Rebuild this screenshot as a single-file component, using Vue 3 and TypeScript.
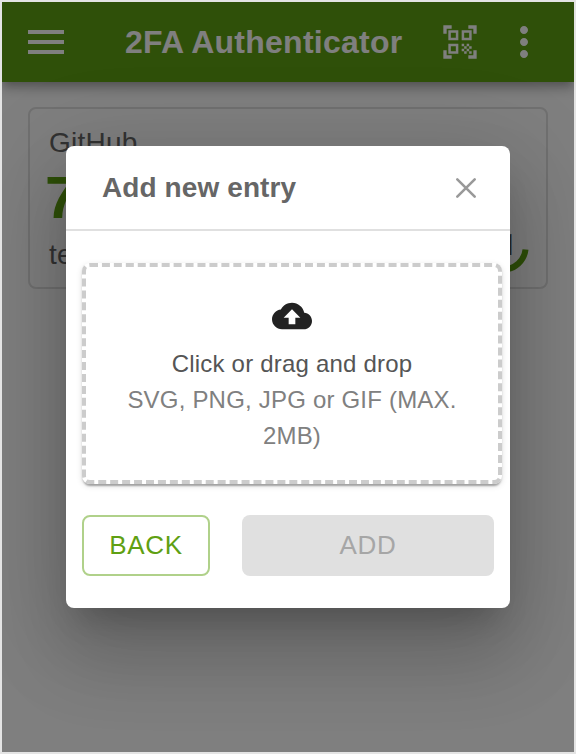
<script setup lang="ts">
import { ref } from 'vue'

interface Entry {
  issuer: string
  code: string
  account: string
  remaining: number
}

const entries = ref<Entry[]>([
  { issuer: 'GitHub', code: '7', account: 'te', remaining: 11 },
])
const dialogOpen = ref(true)
const file = ref<File | null>(null)
</script>

<template>
  <div class="app">
    <header class="bar">
      <svg class="icon menu" viewBox="0 0 24 24"><path d="M3 18h18v-2H3v2zm0-5h18v-2H3v2zm0-7v2h18V6H3z" /></svg>
      <h1 class="bar-title">2FA Authenticator</h1>
      <svg class="icon scan" viewBox="0 0 24 24">
        <path d="M9.5 6.5v3h-3v-3h3M11 5H5v6h6V5zM9.5 14.5v3h-3v-3h3M11 13H5v6h6v-6zM17.5 6.5v3h-3v-3h3M19 5h-6v6h6V5zM13 13h1.5v1.5H13V13zM14.5 14.5H16V16h-1.5v-1.5zM16 13h1.5v1.5H16V13zM13 16h1.5v1.5H13V16zM14.5 17.5H16V19h-1.5v-1.5zM16 16h1.5v1.5H16V16zM17.5 14.5H19V16h-1.5v-1.5zM17.5 17.5H19V19h-1.5v-1.5zM22 7h-2V4h-3V2h5v5zM22 22v-5h-2v3h-3v2h5zM2 22h5v-2H4v-3H2v5zM2 2v5h2V4h3V2H2z" />
      </svg>
      <svg class="icon more" viewBox="0 0 24 24"><path d="M12 8c1.100 0 2-.9 2-2s-.9-2-2-2-2 .9-2 2 .9 2 2 2zm0 2c-1.100 0-2 .9-2 2s.9 2 2 2 2-.9 2-2-.9-2-2-2zm0 6c-1.100 0-2 .9-2 2s.9 2 2 2 2-.9 2-2-.9-2-2-2z" /></svg>
    </header>

    <main class="list">
      <article v-for="entry in entries" :key="entry.issuer" class="card">
        <div class="info">
          <p class="issuer">{{ entry.issuer }}</p>
          <p class="code">{{ entry.code }}</p>
          <p class="account">{{ entry.account }}</p>
        </div>
        <div class="timer">
          <svg viewBox="0 0 52 52"><path d="M47.500 28.500A22.500 22.500 0 0 1 26 48.500" /></svg>
          <span>{{ entry.remaining }}</span>
        </div>
      </article>
    </main>

    <div v-if="dialogOpen" class="backdrop">
      <section class="dialog" role="dialog">
        <div class="dialog-head">
          <h2>Add new entry</h2>
          <svg class="close" viewBox="0 0 24 24" @click="dialogOpen = false"><path d="M3.300 3.300l17.400 17.400M20.700 3.300L3.300 20.700" /></svg>
        </div>
        <div class="dialog-body">
          <div class="drop">
            <svg class="cloud" viewBox="0 0 24 24"><path d="M19.350 10.040C18.670 6.590 15.640 4 12 4 9.110 4 6.600 5.640 5.350 8.040 2.340 8.360 0 10.910 0 14c0 3.310 2.690 6 6 6h13c2.760 0 5-2.240 5-5 0-2.640-2.050-4.780-4.650-4.960zM14 13v4h-4v-4H7l5-5 5 5h-3z" /></svg>
            <p class="lead">Click or drag and drop</p>
            <p class="hint">SVG, PNG, JPG or GIF (MAX. 2MB)</p>
          </div>
          <div class="actions">
            <button class="btn back">BACK</button>
            <button class="btn add" :disabled="!file">ADD</button>
          </div>
        </div>
      </section>
    </div>
  </div>
</template>

<style>
body {
  margin: 0;
  background: #fff;
}
</style>

<style scoped>
* {
  box-sizing: border-box;
}

h1,
h2,
p {
  margin: 0;
}

.app {
  position: relative;
  width: 576px;
  height: 754px;
  border: 2px solid #e4e4e4;
  background: #fff;
  overflow: hidden;
  font-family: "Liberation Sans", Arial, sans-serif;
}

.bar {
  display: flex;
  align-items: center;
  height: 80px;
  padding: 0 26px 0 20px;
  background: #5fa012;
  color: #fff;
  box-shadow: 0 4px 8px -2px rgba(0, 0, 0, 0.2), 0 8px 10px rgba(0, 0, 0, 0.14), 0 2px 20px rgba(0, 0, 0, 0.12);
}

.icon {
  flex: none;
  fill: currentColor;
}

.menu,
.more {
  width: 48px;
  height: 48px;
}

.scan {
  width: 40px;
  height: 40px;
  margin-right: 20px;
}

.bar-title {
  flex: 1;
  padding-left: 55px;
  font-size: 32px;
  line-height: 48px;
  font-weight: 700;
  letter-spacing: 0.25px;
  white-space: nowrap;
}

.list {
  padding: 25px 26px 0;
}

.card {
  display: flex;
  justify-content: space-between;
  height: 182px;
  padding: 17px 16px 0 19px;
  border: 2px solid #e0e0e0;
  border-radius: 8px;
}

.issuer,
.account {
  font-size: 28px;
  line-height: 34px;
  letter-spacing: 0.25px;
  color: #666;
}

.code {
  margin: 3px 0 5px -4px;
  font-size: 60px;
  line-height: 70px;
  font-weight: 700;
  color: #5fa012;
}

.timer {
  display: grid;
  place-items: center;
  align-self: flex-end;
  width: 52px;
  height: 52px;
  margin-bottom: 14px;
  font-family: Roboto, sans-serif;
  font-size: 29px;
  line-height: 34px;
  font-weight: 700;
  color: #555;
}

.timer svg,
.timer span {
  grid-area: 1 / 1;
}

.timer span {
  padding: 0 8px 4px 0;
}

.timer path {
  fill: none;
  stroke: #5fa012;
  stroke-width: 6;
}

.backdrop {
  position: absolute;
  inset: 0;
  padding: 144px 64px;
  background: rgba(0, 0, 0, 0.5);
}

.dialog {
  height: 462px;
  border-radius: 8px;
  background: #fff;
  box-shadow: 0 22px 30px -14px rgba(0, 0, 0, 0.2), 0 48px 76px 6px rgba(0, 0, 0, 0.14), 0 18px 92px 16px rgba(0, 0, 0, 0.12);
}

.dialog-head {
  display: flex;
  align-items: center;
  justify-content: space-between;
  height: 85px;
  padding: 0 32px 0 36px;
  border-bottom: 2px solid #e0e0e0;
}

.dialog-head h2 {
  font-size: 28px;
  line-height: 40px;
  font-weight: 700;
  letter-spacing: 0.1px;
  color: #666;
}

.close {
  width: 24px;
  height: 24px;
  fill: none;
  stroke: #999;
  stroke-width: 2.600;
  stroke-linecap: round;
}

.dialog-body {
  padding: 32px 8px 0 16px;
}

.drop {
  height: 221px;
  padding: 29px 30px 0;
  border: 4px dashed #ccc;
  border-radius: 8px;
  box-shadow: 0 4px 2px -2px rgba(0, 0, 0, 0.2), 0 2px 2px rgba(0, 0, 0, 0.14), 0 2px 6px rgba(0, 0, 0, 0.12);
  text-align: center;
  font-size: 24px;
  line-height: 36px;
}

.cloud {
  display: block;
  width: 40px;
  height: 40px;
  margin: 0 auto 10px;
  fill: #222;
}

.lead {
  letter-spacing: 0.2px;
  color: #555;
}

.hint {
  letter-spacing: 0.2px;
  color: #808080;
}

.actions {
  display: flex;
  gap: 32px;
  padding: 31px 8px 0 0;
}

.btn {
  height: 61px;
  padding: 0;
  border: 0;
  border-radius: 8px;
  font-family: inherit;
  font-size: 26px;
  letter-spacing: 0.7px;
}

.back {
  width: 128px;
  border: 2px solid #b0d18a;
  background: transparent;
  color: #5fa012;
}

.add {
  flex: 1;
  background: #e0e0e0;
  color: #a6a6a6;
}
</style>
